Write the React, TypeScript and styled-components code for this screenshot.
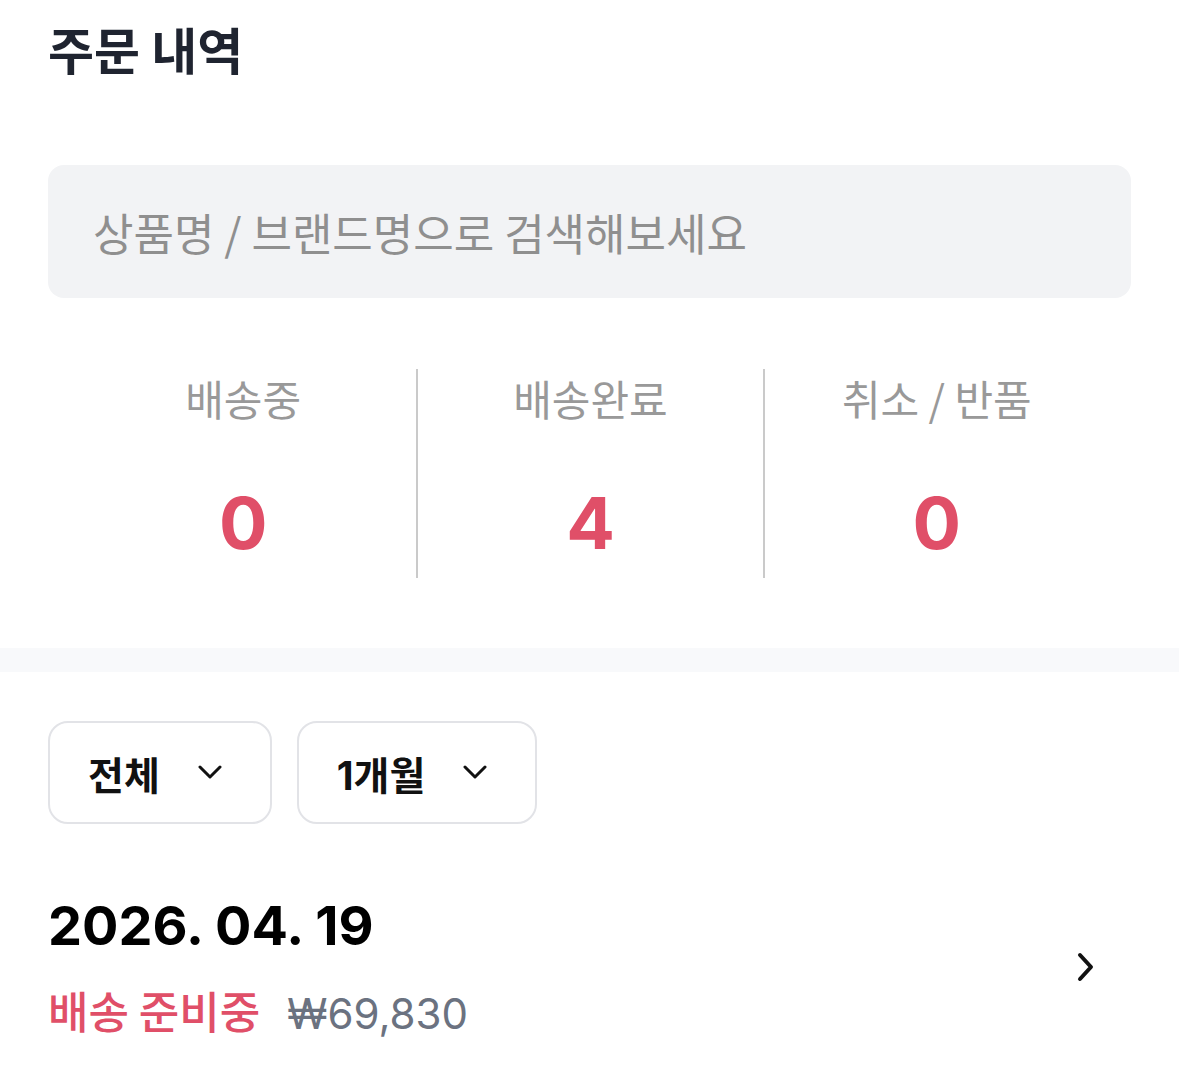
import React from 'react';
import styled, { createGlobalStyle } from 'styled-components';

const GlobalStyle = createGlobalStyle`
  * {
    box-sizing: border-box;
  }
  body {
    margin: 0;
    background: #ffffff;
    font-family: Inter, 'Noto Sans CJK KR', sans-serif;
  }
`;

const Page = styled.div`
  width: 1179px;
  background: #ffffff;
`;

const Section = styled.section`
  padding: 0 48px;
`;

const Title = styled.h1`
  margin: 20px 0 0;
  font-family: 'Noto Sans CJK KR', sans-serif;
  font-size: 50px;
  line-height: 56px;
  font-weight: 700;
  color: #1f2430;
`;

const SearchInput = styled.input`
  display: block;
  width: 100%;
  height: 133px;
  margin-top: 89px;
  padding: 0 45px;
  border: none;
  border-radius: 16px;
  background: #f2f3f5;
  font-family: 'Noto Sans CJK KR', sans-serif;
  font-size: 44px;
  color: #333;
  outline: none;

  &::placeholder {
    color: #8f8f8f;
  }
`;

const Stats = styled.div`
  display: grid;
  grid-template-columns: repeat(3, 1fr);
  margin: 71px 22px 70px;
  height: 209px;
`;

const StatItem = styled.div<{ $divider?: boolean }>`
  display: flex;
  flex-direction: column;
  align-items: center;
  padding-top: 6px;
  border-left: ${({ $divider }) => ($divider ? '2px solid #cacaca' : 'none')};
`;

const StatLabel = styled.div`
  font-family: 'Noto Sans CJK KR', sans-serif;
  font-size: 42px;
  line-height: 46px;
  color: #999999;
`;

const StatValue = styled.div`
  margin-top: 66px;
  font-family: Inter, sans-serif;
  font-size: 72px;
  line-height: 72px;
  font-weight: 700;
  color: #e04f68;
`;

const Band = styled.div`
  height: 24px;
  background: #f8f9fb;
`;

const Filters = styled.div`
  display: flex;
  gap: 25px;
  margin-top: 49px;
`;

const FilterButton = styled.button`
  display: flex;
  align-items: center;
  gap: 38px;
  height: 103px;
  padding: 0 48px 0 38px;
  border: 2px solid #e2e3e7;
  border-radius: 20px;
  background: #ffffff;
  font-family: Inter, 'Noto Sans CJK KR', sans-serif;
  font-size: 39px;
  font-weight: 700;
  color: #111111;
  cursor: pointer;
`;

const OrderRow = styled.div`
  display: flex;
  align-items: center;
  justify-content: space-between;
  margin-top: 72px;
  padding-right: 36px;
`;

const OrderInfo = styled.div`
  display: flex;
  flex-direction: column;
`;

const OrderDate = styled.div`
  font-family: Inter, sans-serif;
  font-size: 54px;
  line-height: 60px;
  font-weight: 700;
  color: #000000;
`;

const OrderMeta = styled.div`
  display: flex;
  align-items: baseline;
  gap: 27px;
  margin-top: 30px;
`;

const OrderStatus = styled.span`
  font-family: 'Noto Sans CJK KR', sans-serif;
  font-size: 44px;
  line-height: 48px;
  font-weight: 500;
  color: #e04f68;
`;

const OrderPrice = styled.span`
  font-family: Inter, sans-serif;
  font-size: 42px;
  line-height: 48px;
  color: #6b7280;
`;

const ChevronDown = () => (
  <svg width="24" height="15" viewBox="0 0 24 15" fill="none">
    <polyline points="2 2 12 12 22 2" stroke="#111" strokeWidth="3" strokeLinecap="round" strokeLinejoin="round" />
  </svg>
);

const ChevronRight = () => (
  <svg width="18" height="30" viewBox="0 0 18 30" fill="none">
    <polyline points="3 3 14 15 3 27" stroke="#111" strokeWidth="4" strokeLinecap="round" strokeLinejoin="round" />
  </svg>
);

const stats = [
  { label: '배송중', value: 0 },
  { label: '배송완료', value: 4 },
  { label: '취소 / 반품', value: 0 }
];

const filters = ['전체', '1개월'];

function App() {
  return (
    <Page>
      <GlobalStyle />
      <Section>
        <Title>주문 내역</Title>
        <SearchInput placeholder="상품명 / 브랜드명으로 검색해보세요" />
        <Stats>
          {stats.map((item, i) => (
            <StatItem key={item.label} $divider={i > 0}>
              <StatLabel>{item.label}</StatLabel>
              <StatValue>{item.value}</StatValue>
            </StatItem>
          ))}
        </Stats>
      </Section>
      <Band />
      <Section>
        <Filters>
          {filters.map((f) => (
            <FilterButton key={f} type="button">
              {f}
              <ChevronDown />
            </FilterButton>
          ))}
        </Filters>
        <OrderRow>
          <OrderInfo>
            <OrderDate>2026. 04. 19</OrderDate>
            <OrderMeta>
              <OrderStatus>배송 준비중</OrderStatus>
              <OrderPrice>₩69,830</OrderPrice>
            </OrderMeta>
          </OrderInfo>
          <ChevronRight />
        </OrderRow>
      </Section>
    </Page>
  );
}

export default App;
